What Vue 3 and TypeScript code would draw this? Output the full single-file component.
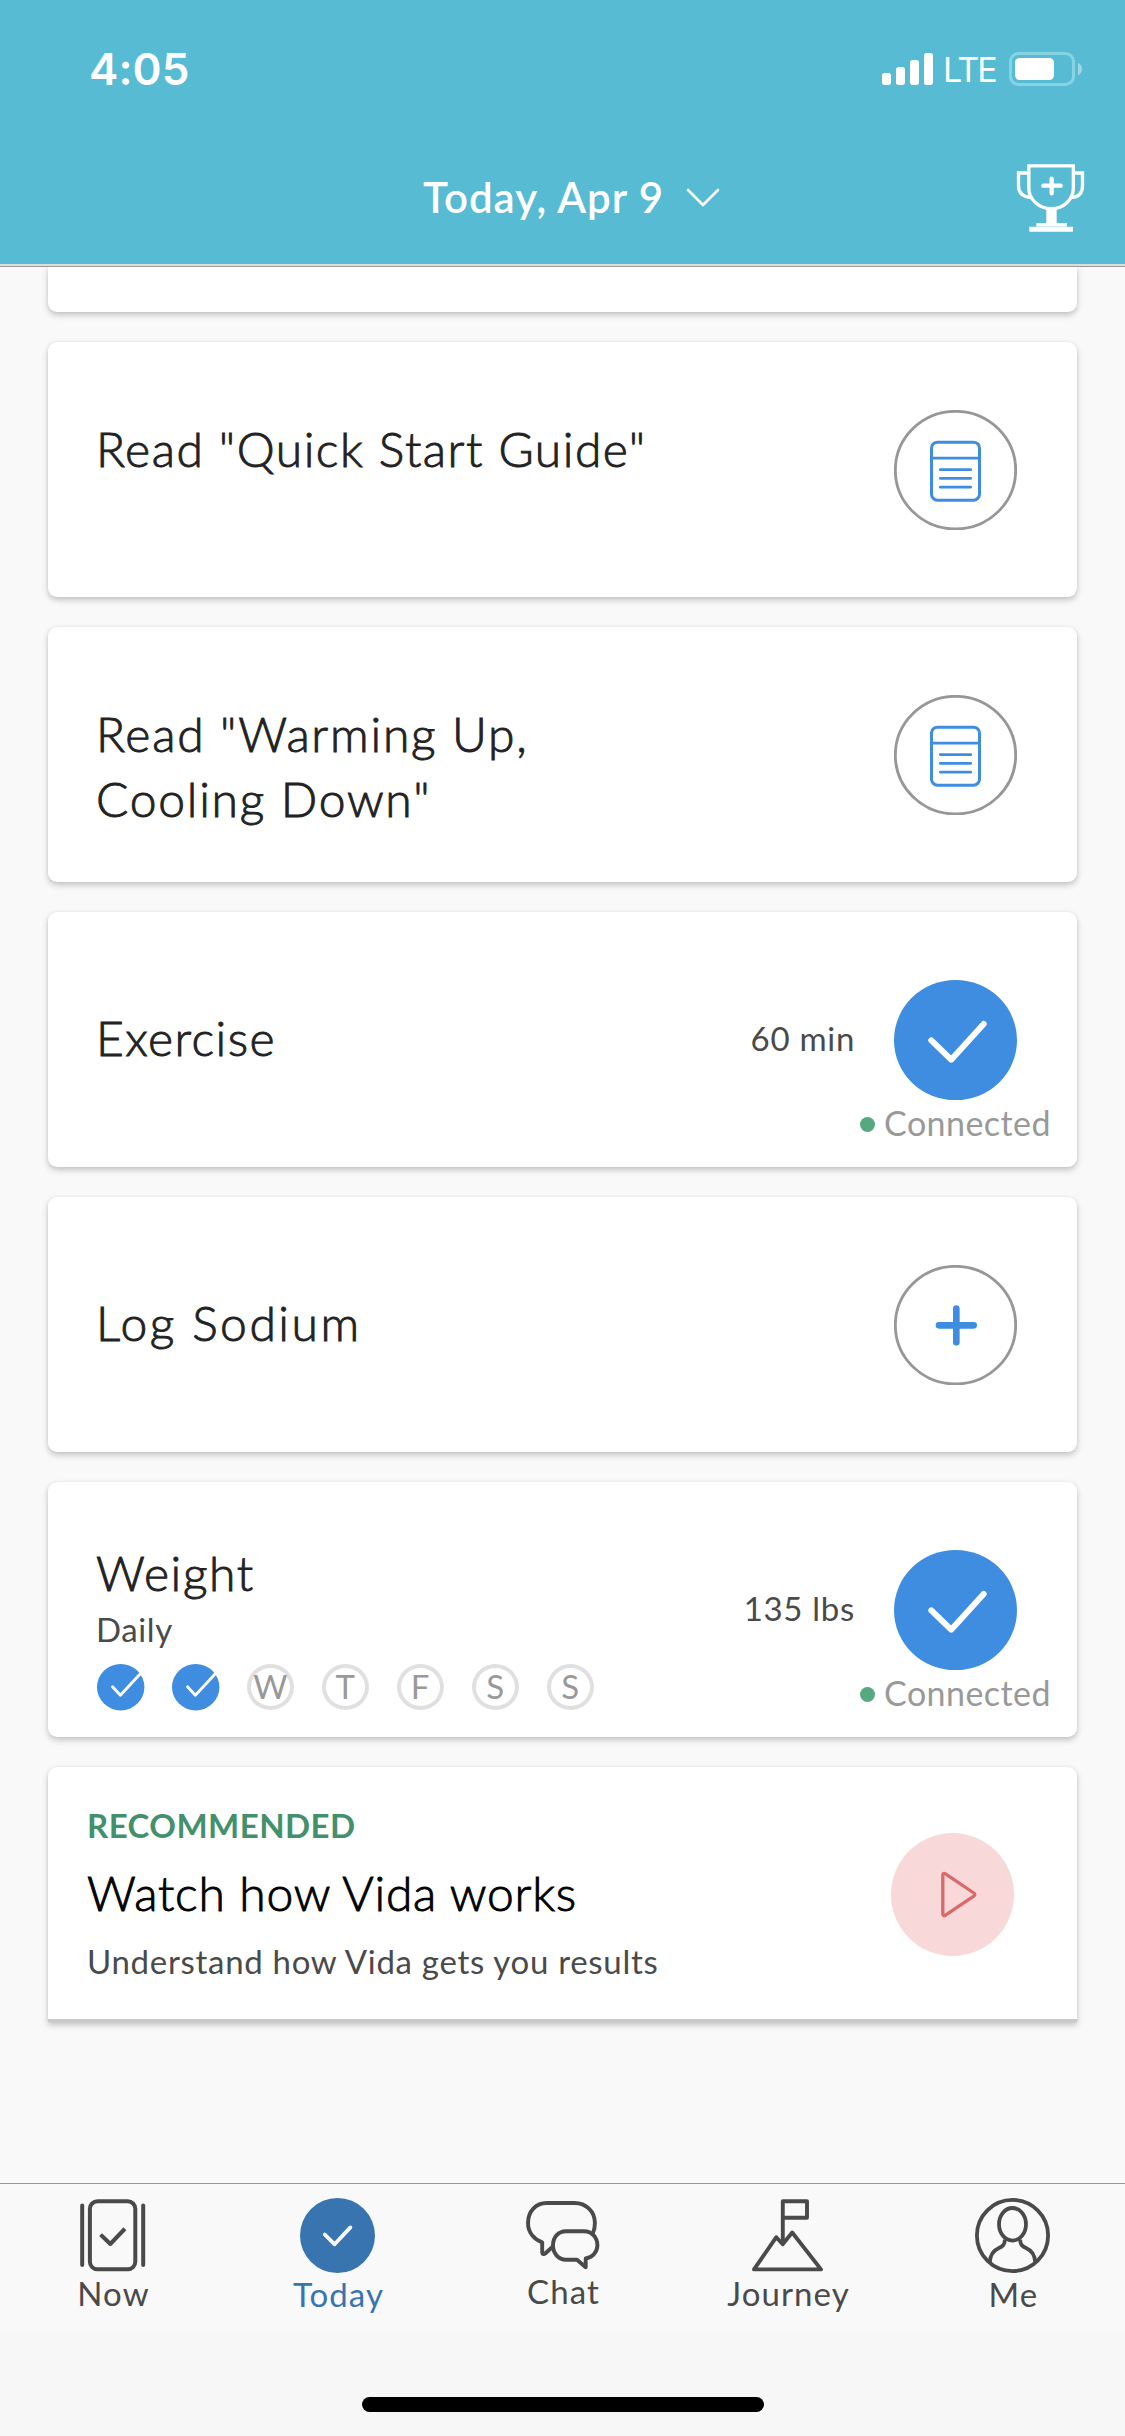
<script setup lang="ts">
type Action = 'read' | 'done' | 'add'

interface Task {
  id: string
  lines: string[]
  tracking: number
  action: Action
  layout: 'article' | 'single' | 'habit'
  value?: string
  frequency?: string
  week?: { label: string; done: boolean }[]
  connected?: boolean
}

interface Tab {
  id: 'now' | 'today' | 'chat' | 'journey' | 'me'
  label: string
}

const tasks: Task[] = [
  { id: 'quick-start', lines: ['Read "Quick Start Guide"'], tracking: 1.5, action: 'read', layout: 'article' },
  { id: 'warming-up', lines: ['Read "Warming Up,', 'Cooling Down"'], tracking: 1.75, action: 'read', layout: 'article' },
  { id: 'exercise', lines: ['Exercise'], tracking: 1.4, action: 'done', layout: 'single', value: '60 min', connected: true },
  { id: 'sodium', lines: ['Log Sodium'], tracking: 2.5, action: 'add', layout: 'single' },
  {
    id: 'weight',
    lines: ['Weight'],
    tracking: 1.6,
    action: 'done',
    layout: 'habit',
    value: '135 lbs',
    frequency: 'Daily',
    connected: true,
    week: [
      { label: 'M', done: true },
      { label: 'T', done: true },
      { label: 'W', done: false },
      { label: 'T', done: false },
      { label: 'F', done: false },
      { label: 'S', done: false },
      { label: 'S', done: false },
    ],
  },
]

const tabs: Tab[] = [
  { id: 'now', label: 'Now' },
  { id: 'today', label: 'Today' },
  { id: 'chat', label: 'Chat' },
  { id: 'journey', label: 'Journey' },
  { id: 'me', label: 'Me' },
]
const activeTab: Tab['id'] = 'today'
</script>

<template>
  <div class="screen">
    <header class="header">
      <div class="status">
        <span class="clock">4:05</span>
        <div class="status-right">
          <svg class="signal" viewBox="66 69 153 96">
            <g fill="#fff">
              <rect x="66" y="129" width="27" height="36" rx="8" />
              <rect x="108" y="111" width="27" height="54" rx="8" />
              <rect x="150" y="90" width="27" height="75" rx="8" />
              <rect x="192" y="69" width="27" height="96" rx="8" />
            </g>
          </svg>
          <span class="carrier">LTE</span>
          <svg class="battery" viewBox="447 66 219 102">
            <rect x="451.500" y="70.500" width="189" height="93" rx="24" fill="none" stroke="#87d3e3" stroke-width="9" />
            <rect x="465" y="84" width="117" height="66" rx="14" fill="#fff" />
            <path d="M654 98C662 102 666 109 666 117S662 132 654 136Z" fill="#9adae7" />
          </svg>
        </div>
      </div>
      <div class="title-bar">
        <h1 class="date">Today, Apr 9</h1>
        <svg class="chevron" viewBox="0 0 34 20">
          <path d="M2 2L17 17L32 2" fill="none" stroke="#fff" stroke-width="2.600" stroke-linecap="round" stroke-linejoin="round" />
        </svg>
        <svg class="trophy" viewBox="465 400 210 210">
          <g fill="none" stroke="#fff" stroke-width="10">
            <path d="M506.500 408.500H640V475C640 510 610 537 574 537C538 537 506.500 510 506.500 475Z" />
            <path d="M506 430H475.500V470C475.500 490 490 503 512 503" />
            <path d="M640 430H667.500V470C667.500 490 655 503 636 503" />
            <path d="M575 447V491M550 468H602" stroke-width="13" stroke-linecap="round" />
          </g>
          <path d="M559 538H590V580H621V591H639V606H508V591H529V580H559Z" fill="#fff" />
          <path d="M529 591H621" stroke="#a9dfea" stroke-width="2" />
        </svg>
      </div>
    </header>

    <main class="feed">
      <section class="card card-clipped"></section>

      <section v-for="task in tasks" :key="task.id" class="card task" :class="`task-${task.layout}`">
        <div class="body">
          <h2 class="task-title" :style="{ letterSpacing: `${task.tracking}px` }">
            <span v-for="line in task.lines" :key="line" class="line">{{ line }}</span>
          </h2>
          <p v-if="task.frequency" class="frequency">{{ task.frequency }}</p>
          <div v-if="task.week" class="week">
            <span v-for="(day, i) in task.week" :key="i" class="day" :class="{ 'day-open': !day.done }">
              <svg v-if="day.done" class="day-check" viewBox="0 0 48 47">
                <ellipse cx="23.700" cy="23.200" rx="23.700" ry="23.200" fill="#3f8de0" />
                <path d="M15.500 22.700L23.400 31.200L44 9" fill="none" stroke="#fff" stroke-width="2.800" stroke-linecap="round" stroke-linejoin="round" />
              </svg>
              <template v-else>{{ day.label }}</template>
            </span>
          </div>
        </div>
        <span v-if="task.value" class="value">{{ task.value }}</span>
        <svg class="action" viewBox="0 0 369 361">
          <ellipse v-if="task.action === 'done'" cx="184.500" cy="180.500" rx="184.500" ry="180.500" fill="#3f8de0" />
          <ellipse v-else cx="184.500" cy="180.500" rx="180.500" ry="176.500" fill="#fff" stroke="#979797" stroke-width="8.500" />
          <g fill="none" stroke-linecap="round" stroke-linejoin="round">
            <path v-if="task.action === 'done'" d="M112 181L171.500 239L269 132" stroke="#fff" stroke-width="18" />
            <path v-else-if="task.action === 'add'" d="M187 131V232M135 181H239" stroke="#3f8de0" stroke-width="20" />
            <g v-else stroke="#3f8de0" stroke-width="9">
              <rect x="112.500" y="96.500" width="144" height="174" rx="18" />
              <path d="M113 144.500H257M139 179H230M139 205H230M139 231.500H230" stroke-width="8.500" />
            </g>
          </g>
        </svg>
        <span v-if="task.connected" class="connected"><i class="dot"></i>Connected</span>
      </section>

      <section class="card promo">
        <div class="promo-body">
          <p class="eyebrow">RECOMMENDED</p>
          <h2 class="promo-title">Watch how Vida works</h2>
          <p class="promo-text">Understand how Vida gets you results</p>
        </div>
        <svg class="play" viewBox="0 0 123 123">
          <circle cx="61.500" cy="61.500" r="61.500" fill="#f8d8d9" />
          <path d="M51.800 42V81C51.800 82.500 53 83 54.500 82.200L82.800 63.200C84.200 62.200 84.200 61 82.800 60L54.500 40.900C53 40 51.800 40.500 51.800 42Z" fill="none" stroke="#d96a69" stroke-width="3.300" />
        </svg>
      </section>
    </main>

    <nav class="tabs">
      <a v-for="tab in tabs" :key="tab.id" class="tab" :class="[`tab-${tab.id}`, { active: tab.id === activeTab }]">
        <svg v-if="tab.id === 'now'" width="66" height="73" viewBox="0 0 66 73">
          <g fill="none" stroke="currentColor" stroke-linecap="round" stroke-linejoin="round" stroke-width="4">
            <path d="M2.200 6.500V66M63.200 6.500V66" />
            <rect x="9.900" y="2.300" width="45.400" height="68" rx="7.500" />
            <path d="M22 37L30.300 45L43.500 31.200" stroke-linecap="square" />
          </g>
        </svg>
        <svg v-else-if="tab.id === 'today'" width="75" height="75" viewBox="0 0 75 75">
          <circle cx="37.500" cy="37.500" r="37.500" fill="#3874b0" />
          <path d="M24.800 36.500L34.600 46.300L50.400 29.400" fill="none" stroke="#f9f9f9" stroke-width="3.800" stroke-linecap="round" stroke-linejoin="round" />
        </svg>
        <svg v-else-if="tab.id === 'chat'" width="74" height="69" viewBox="0 0 74 69">
          <g fill="none" stroke="currentColor" stroke-width="3.900" stroke-linejoin="round">
            <path d="M26.600 45.700L19.500 52.300C18 53.600 16.200 53.200 16.200 51.500V41.300C8 38.500 2 31.500 2 22C2 10.500 10 1.950 20.500 1.950H48.500C60 1.950 68.900 10.500 68.900 22C68.900 26 68.300 29.500 66.800 32.500" />
            <path d="M51 58.700H40C32.500 58.700 27 52.500 27 44.300C27 36 32.500 30.200 40 30.200H58C66 30.200 71.400 36.500 71.400 44.300C71.400 50.800 66.500 56.500 59.700 57.500V66.300Z" />
          </g>
        </svg>
        <svg v-else-if="tab.id === 'journey'" width="71" height="73" viewBox="0 0 71 73">
          <g fill="none" stroke="currentColor" stroke-width="3.900" stroke-linejoin="round">
            <path d="M30.800 45V2.300H55V18.700H31" />
            <path d="M2 70.400L24.300 38.200L30.700 45.200L40.200 33.500L69 70.400Z" />
          </g>
        </svg>
        <svg v-else width="75" height="75" viewBox="0 0 75 75">
          <g fill="none" stroke="currentColor" stroke-width="3.800">
            <circle cx="37.500" cy="37.500" r="35.600" />
            <ellipse cx="37.500" cy="26.300" rx="13.500" ry="16.300" />
            <path d="M14.800 64C15.300 57 18.500 52.500 23.500 50.300C28 48.200 30 46.500 29.800 41.500M60.200 64C59.700 57 56.500 52.500 51.500 50.300C47 48.200 45 46.500 45.200 41.500" />
          </g>
        </svg>
        <span class="tab-label">{{ tab.label }}</span>
      </a>
    </nav>
    <div class="home-area"><div class="home-indicator"></div></div>
  </div>
</template>

<style>
body {
  margin: 0;
}
</style>

<style scoped>
* {
  box-sizing: border-box;
}

h1,
h2,
p {
  margin: 0;
}

svg {
  display: block;
  flex: none;
}

.screen {
  width: 1125px;
  height: 2436px;
  display: flex;
  flex-direction: column;
  overflow: hidden;
  background: #f9f9f9;
  color: #222;
  font-family: Lato, "Open Sans", sans-serif;
}

.header {
  flex: none;
  height: 267px;
  background: #56bbd3;
  border-bottom: 1px solid #999;
  box-shadow: inset 0 -2px 0 #dcdede;
  color: #fff;
}

.status {
  height: 138px;
  display: flex;
  justify-content: space-between;
  padding: 41px 43px 0 89px;
}

.clock {
  font: 600 44px/56px Inter, sans-serif;
  letter-spacing: 0.1px;
}

.status-right {
  display: flex;
  align-items: flex-start;
  padding-top: 11px;
}

.signal {
  width: 51px;
  height: 32px;
  margin-top: 1px;
}

.carrier {
  width: 76px;
  padding-left: 10px;
  font: 400 34px/36px Inter, sans-serif;
  letter-spacing: -1.8px;
}

.battery {
  width: 73px;
  height: 34px;
}

.title-bar {
  display: flex;
  align-items: flex-start;
  height: 126px;
  padding-left: 423px;
}

.date {
  width: 263px;
  padding-top: 34px;
  font-size: 42px;
  font-weight: 600;
  line-height: 50px;
  letter-spacing: 1px;
  white-space: nowrap;
}

.chevron {
  width: 34px;
  height: 20px;
  margin-top: 50px;
}

.trophy {
  width: 70px;
  height: 70px;
  margin: 25px 0 0 295px;
}

.feed {
  flex: 1;
  min-height: 0;
  display: flex;
  flex-direction: column;
  gap: 30px;
  padding: 0 48px;
  overflow: hidden;
}

.card {
  position: relative;
  flex: none;
  display: flex;
  height: 255px;
  border-radius: 9px;
  background: #fff;
  box-shadow: 0 3px 6px rgba(0, 0, 0, 0.22), 0 0 3px rgba(0, 0, 0, 0.06);
}

.card-clipped {
  height: 45px;
  border-radius: 0 0 9px 9px;
}

.task {
  padding: 0 60px 0 48px;
}

.body {
  flex: 1;
  min-width: 0;
}

.task-article .body {
  padding-top: 74px;
}

.task-single .body {
  padding-top: 93px;
}

.task-habit .body {
  padding-top: 58px;
}

.task-title {
  font-size: 48px;
  font-weight: 300;
  line-height: 65px;
  -webkit-text-stroke: 0.9px #222;
}

.line {
  display: block;
  white-space: nowrap;
}

.frequency {
  margin-top: 4px;
  font-size: 33px;
  line-height: 40px;
  letter-spacing: 0.600px;
  color: #4a4a4a;
}

.week {
  display: flex;
  gap: 27.700px;
  margin: 15px 0 0 0.600px;
}

.day {
  width: 47.300px;
  height: 46.300px;
  font-size: 33px;
  line-height: 37px;
  text-align: center;
  color: #999;
}

.day-open {
  border: 4px solid #e0e0e0;
  border-radius: 50%;
  display: flex;
  justify-content: center;
}

.day-check {
  width: 48px;
  height: 47px;
}

.value {
  margin: 106px 39px 0 0;
  font-size: 33px;
  line-height: 40px;
  letter-spacing: 0.700px;
  color: #4a4a4a;
}

.action {
  width: 123px;
  height: 120.330px;
  margin-top: 68px;
}

.connected {
  position: absolute;
  right: 26px;
  bottom: 23px;
  display: flex;
  align-items: center;
  font-size: 34px;
  line-height: 42px;
  letter-spacing: 0.450px;
  color: #999;
}

.dot {
  width: 15px;
  height: 15px;
  margin: 3px 9px 0 0;
  border-radius: 50%;
  background: #55a880;
}

.promo {
  justify-content: space-between;
  padding: 0 63px 0 39px;
  border-bottom: 3px solid #c9c9c9;
  border-radius: 9px 9px 0 0;
}

.eyebrow {
  margin-top: 38px;
  font-size: 33px;
  font-weight: 700;
  line-height: 40px;
  letter-spacing: 0.450px;
  color: #43916c;
}

.promo-title {
  margin-top: 15px;
  font-size: 48px;
  font-weight: 300;
  line-height: 65px;
  letter-spacing: 0.750px;
  color: #000;
  -webkit-text-stroke: 0.9px #000;
}

.promo-text {
  margin-top: 16px;
  font-size: 33px;
  line-height: 40px;
  letter-spacing: 0.700px;
  color: #4a4a4a;
}

.play {
  width: 123px;
  height: 123px;
  margin-top: 66px;
}

.tabs {
  flex: none;
  display: flex;
  height: 150px;
  border-top: 1px solid #999;
  background: #f9f9f9;
}

.tab {
  flex: 1;
  display: flex;
  flex-direction: column;
  align-items: center;
  padding-top: 15px;
  color: #4a4a4a;
}

.tab-label {
  margin-top: 1px;
  padding-left: 2px;
  font-size: 33px;
  line-height: 40px;
  letter-spacing: 1.100px;
}

.tab-chat {
  padding-top: 17px;
}

.tab-today,
.tab-me {
  padding-top: 14px;
}

.active {
  color: #3874b0;
}

.home-area {
  flex: none;
  display: flex;
  justify-content: center;
  height: 103px;
  padding-top: 64px;
  background: #f7f7f7;
}

.home-indicator {
  width: 402px;
  height: 15px;
  border-radius: 8px;
  background: #000;
}
</style>
